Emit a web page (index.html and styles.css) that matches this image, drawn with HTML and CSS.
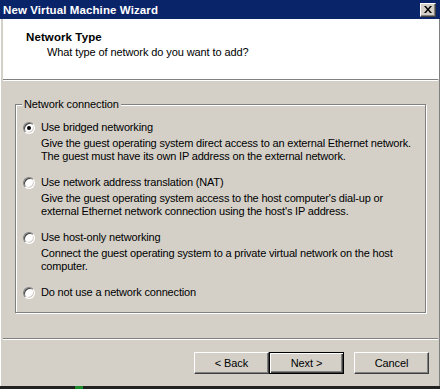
FILE: index.html
```html
<!DOCTYPE html>
<html lang="en">

<head>
  <meta charset="UTF-8">
  <title>New Virtual Machine Wizard</title>
  <link rel="stylesheet" href="styles.css">
</head>

<body>
  <div class="window">
    <div class="titlebar">
      <span class="title">New Virtual Machine Wizard</span>
      <button class="close-btn" aria-label="Close">
        <svg width="8" height="7" viewBox="0 0 8 7">
          <path d="M0 0h2l2 2.5L6 0h2L5 3.5 8 7H6L4 4.5 2 7H0l3-3.5z" fill="#000" />
        </svg>
      </button>
    </div>

    <div class="header">
      <h1>Network Type</h1>
      <p>What type of network do you want to add?</p>
    </div>

    <div class="rule"></div>

    <div class="content">
      <div class="group">
        <span class="group-label">Network connection</span>

        <div class="option">
          <label class="option-row">
            <span class="radio checked"></span>
            Use bridged networking
          </label>
          <p class="desc">Give the guest operating system direct access to an external Ethernet network.<br>The guest must have its own IP address on the external network.</p>
        </div>

        <div class="option">
          <label class="option-row">
            <span class="radio"></span>
            Use network address translation (NAT)
          </label>
          <p class="desc">Give the guest operating system access to the host computer's dial-up or<br>external Ethernet network connection using the host's IP address.</p>
        </div>

        <div class="option">
          <label class="option-row">
            <span class="radio"></span>
            Use host-only networking
          </label>
          <p class="desc">Connect the guest operating system to a private virtual network on the host<br>computer.</p>
        </div>

        <div class="option">
          <label class="option-row">
            <span class="radio"></span>
            Do not use a network connection
          </label>
        </div>
      </div>
    </div>

    <div class="rule"></div>

    <div class="buttons">
      <button class="btn">&lt; Back</button>
      <button class="btn default">Next &gt;</button>
      <button class="btn cancel">Cancel</button>
    </div>

    <div class="taskbar"><span class="tray"></span></div>
  </div>
</body>

</html>
```

FILE: styles.css
```css
* {
  box-sizing: border-box;
  margin: 0;
  padding: 0;
}

body {
  width: 440px;
  height: 389px;
  overflow: hidden;
  font-family: 'Liberation Sans', Arial, sans-serif;
  font-size: 11px;
  letter-spacing: -0.1px;
  color: #000;
  background: #d4d0c8;
}

.window {
  display: flex;
  flex-direction: column;
  width: 440px;
  height: 389px;
  padding: 0 2px 0 3px;
  background: #d4d0c8;
  box-shadow: inset 1px 0 #fff, inset -1px 0 #808080;
}

.window > * {
  flex-shrink: 0;
}

.titlebar {
  display: flex;
  align-items: center;
  justify-content: space-between;
  height: 19px;
  margin: 0 -2px 0 -3px;
  padding: 0 4px 0 3px;
  background: #0a246a;
}

.title {
  color: #fff;
  font-weight: bold;
  font-size: 11.5px;
  letter-spacing: 0.1px;
}

.close-btn {
  display: flex;
  align-items: center;
  justify-content: center;
  width: 16px;
  height: 14px;
  background: #d4d0c8;
  border: 1px solid;
  border-color: #fff #404040 #404040 #fff;
  box-shadow: inset -1px -1px #808080;
}

.header {
  height: 60px;
  padding: 12px 0 0 23px;
  background: #fff;
  margin-right: -1px;
}

.header h1 {
  font-size: 11.5px;
  font-weight: bold;
  line-height: 13px;
  letter-spacing: 0.1px;
}

.header p {
  margin: 2px 0 0 21px;
  line-height: 13px;
}

.rule {
  height: 2px;
  border-top: 1px solid #808080;
  border-bottom: 1px solid #fff;
}

.content {
  flex: 1 1 auto;
  min-height: 0;
  display: flex;
  padding: 23px 12px 25px 12px;
}

.group {
  position: relative;
  flex: 1;
  padding: 16px 7px 0;
  border: 1px solid #808080;
  box-shadow: 1px 1px 0 #fff, inset 1px 1px 0 #fff;
}

.group-label {
  position: absolute;
  top: -7px;
  left: 6px;
  padding: 0 2px;
  line-height: 13px;
  background: #d4d0c8;
}

.option {
  margin-bottom: 13px;
}

.option-row {
  display: flex;
  align-items: center;
  gap: 6px;
  line-height: 13px;
  letter-spacing: -0.17px;
}

.radio {
  position: relative;
  width: 12px;
  height: 12px;
  flex: none;
  border-radius: 50%;
  background: #fff;
  border: 1px solid;
  border-color: #808080 #fff #fff #808080;
  box-shadow: inset 1px 1px #404040, inset -1px -1px #d4d0c8;
}

.radio.checked::after {
  content: "";
  position: absolute;
  top: 3px;
  left: 3px;
  width: 4px;
  height: 4px;
  border-radius: 50%;
  background: #000;
}

.desc {
  margin: 3px 0 0 18px;
  line-height: 13px;
  letter-spacing: -0.18px;
  white-space: nowrap;
}

.buttons {
  display: flex;
  justify-content: flex-end;
  height: 46px;
  padding: 12px 9px 0 0;
}

.btn {
  width: 75px;
  height: 22px;
  font-family: inherit;
  font-size: 11px;
  letter-spacing: -0.1px;
  background: #d4d0c8;
  border: 1px solid;
  border-color: #fff #404040 #404040 #fff;
  box-shadow: inset -1px -1px #808080;
}

.btn.default {
  border: 1px solid #000;
  box-shadow: inset 1px 1px #fff, inset -1px -1px #404040, inset -2px -2px #808080;
}

.btn.cancel {
  margin-left: 10px;
}

.taskbar {
  height: 3px;
  margin: 0 -2px 0 -3px;
  background: #222;
}

.tray {
  display: block;
  width: 8px;
  height: 3px;
  margin-left: 75px;
  background: #1a8a2a;
}
```
